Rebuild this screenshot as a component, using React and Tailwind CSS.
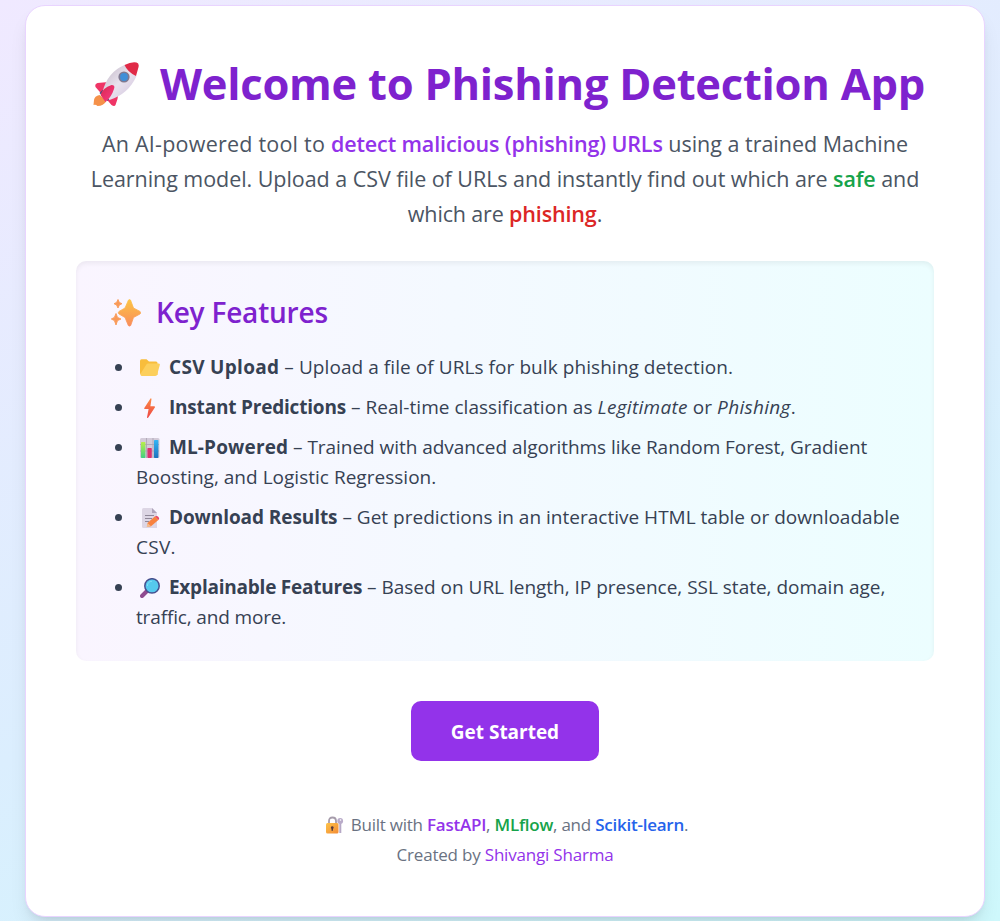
import React from 'react';

function Rocket() {
  return (
    <svg viewBox="0 0 46 46" className="mt-[2px] h-[46px] w-[47px] shrink-0">
      <defs>
        <linearGradient id="rk-body" x1="0" y1="0" x2="1" y2="1">
          <stop offset="0" stopColor="#bfb4c4" />
          <stop offset=".5" stopColor="#e9e3ee" />
          <stop offset="1" stopColor="#cfc0dc" />
        </linearGradient>
        <linearGradient id="rk-fin" x1="0" y1="0" x2="1" y2="1">
          <stop offset="0" stopColor="#d8284f" />
          <stop offset="1" stopColor="#fb3c86" />
        </linearGradient>
      </defs>
      <path d="M6 33Q1 34 .5 38L0 43Q2 42 4 44Q10 44 13 39Z" fill="#f5914a" />
      <path d="M15 20L4 21Q1 22 2 25L9 33ZM25 30L24 37L22 43Q21 45 18 43L12 36Z" fill="#ef3566" />
      <path d="M6 31L14 39L17 36L9 28Z" fill="#46497f" />
      <path d="M9 30Q14 10 31 3L43 14Q35 32 16 38Z" fill="url(#rk-body)" />
      <path d="M31 3Q38 -.5 43 .5Q46.5 1.5 44.5 7L42.5 14Q34 10 31 3Z" fill="#e02a47" />
      <path d="M7 33Q9 26 18 23Q22 23 20.5 27Q18 35 12 40Q9 36 7 33Z" fill="url(#rk-fin)" />
      <circle cx="30.5" cy="15" r="5.6" fill="#7f7990" />
      <circle cx="30.5" cy="15" r="3.9" fill="#3f8fd8" />
    </svg>
  );
}

function Sparkles() {
  return (
    <svg viewBox="0 0 30 28" className="mt-[1px] h-[28px] w-[30px] shrink-0">
      <defs>
        <linearGradient id="sp" x1="0" y1="0" x2="0" y2="1">
          <stop offset="0" stopColor="#fcc444" />
          <stop offset="1" stopColor="#f98c5c" />
        </linearGradient>
      </defs>
      <path d="M17.5 1Q18.5 .2 19.5 1L22.5 9L29 12.4Q30.4 13.7 29 15L22.5 18.5L19.7 26.5Q18.5 27.7 17.3 26.5L14 18.5L8 15Q6.6 13.7 8 12.4L14 9Z" fill="url(#sp)" stroke="url(#sp)" strokeWidth=".8" strokeLinejoin="round" />
      <path d="M7 .5L8.3 3.4L11 4.7L8.3 6L7 9L5.6 6L3 4.7L5.6 3.4ZM5 14.5L6.5 18.4L10 20L6.5 21.6L5 26L3.4 21.6L.3 20L3.4 18.4Z" fill="#f99a58" stroke="#f99a58" strokeWidth=".9" strokeLinejoin="round" />
    </svg>
  );
}

const ICON = 'mr-[4px] ml-[4px] inline-block h-[20px] w-[20px] align-[-4px]';

function Folder() {
  return (
    <svg viewBox="0 0 20 20" className={ICON}>
      <path d="M0 3Q0 1.2 1.5 1.2H6.5L9 3.4H16Q17.5 3.4 17.5 5V17H2Q0 17 0 15Z" fill="#f8bd3c" />
      <path d="M1 17.8Q.2 17 1 15L6.2 6.7Q6.8 5.4 8.5 5.4H18.5Q20.2 5.5 19.8 7L17.2 16.5Q16.8 18 15 18H2Z" fill="#fccf5c" />
    </svg>
  );
}

function Bolt() {
  return (
    <svg viewBox="0 0 20 20" className={ICON}>
      <defs>
        <linearGradient id="bolt" x1="0" y1="0" x2="0" y2="1">
          <stop offset="0" stopColor="#fb8a45" />
          <stop offset="1" stopColor="#ee4745" />
        </linearGradient>
      </defs>
      <path d="M10.5 .5L4.3 10Q4 11 5 11H8.6L7 19.4Q7.4 20.4 8.3 19.5L15 9.3Q15.3 8.2 14 8.2H10.4L11.5 1Q11.2 0 10.5 .5Z" fill="url(#bolt)" />
    </svg>
  );
}

function Chart() {
  return (
    <svg viewBox="0 0 20 20" className={ICON}>
      <defs>
        <linearGradient id="ch-g" x1="0" y1="0" x2="0" y2="1"><stop offset="0" stopColor="#b9ef4a" /><stop offset="1" stopColor="#42cf83" /></linearGradient>
        <linearGradient id="ch-b" x1="0" y1="0" x2="0" y2="1"><stop offset="0" stopColor="#35b5f5" /><stop offset="1" stopColor="#1d72bd" /></linearGradient>
      </defs>
      <rect width="19.5" height="20" rx="1.5" fill="#d3cbd9" />
      <path d="M0 6.5H19M0 13H19M6.5 0V20M13 0V20" stroke="#aaa2b1" strokeWidth=".8" />
      <rect x="1" y="4" width="4.4" height="16" rx=".7" fill="url(#ch-g)" />
      <rect x="7.4" y="10" width="4.4" height="10" rx=".7" fill="#dc3370" />
      <rect x="14" y="2" width="4.4" height="18" rx=".7" fill="url(#ch-b)" />
    </svg>
  );
}

function Memo() {
  return (
    <svg viewBox="0 0 20 20" className={ICON}>
      <path d="M3.5 0H12L17 5V20H3.5Q2 20 2 18.5V1.5Q2 0 3.5 0Z" fill="#ddd6e5" />
      <path d="M12 0V5H17Z" fill="#aea4ba" />
      <path d="M5 7.5H14M5 10.5H12M5 13.5H9" stroke="#8f8799" strokeWidth="1" />
      <path d="M7.5 15L15 8.3L18.4 12L11 18.3L7 19Z" fill="#f8823f" />
      <path d="M15 8.3Q17 7.3 18.5 9Q20 11 18.4 12L15 8.3Z" fill="#e94560" />
      <path d="M7.5 15L11 18.3L6.6 19.3Z" fill="#f3bd91" />
    </svg>
  );
}

function Magnifier() {
  return (
    <svg viewBox="0 0 20 20" className={ICON}>
      <path d="M7 13L2 18" stroke="#8f4b8f" strokeWidth="4" strokeLinecap="round" />
      <circle cx="12" cy="7.9" r="7.2" fill="#55c9ee" stroke="#46508f" strokeWidth="1.5" />
      <path d="M7.4 8A4.8 4.8 0 0 1 12 3.3" fill="none" stroke="#80def5" strokeWidth="1" />
    </svg>
  );
}

function LockKey() {
  return (
    <svg viewBox="0 0 18 18" className="mr-[7px] inline-block h-[18px] w-[18px] align-[-3px]">
      <defs>
        <linearGradient id="lock" x1="0" y1="0" x2="1" y2="1"><stop offset="0" stopColor="#fdc348" /><stop offset="1" stopColor="#f38b34" /></linearGradient>
      </defs>
      <path d="M3 8V5Q3 1.5 6.5 1.5Q10 1.5 10 5V8" fill="none" stroke="#a69cab" strokeWidth="1.8" />
      <path d="M14.3 6V17" stroke="#b6a8c6" strokeWidth="2" />
      <circle cx="14.2" cy="5" r="2.9" fill="#b9abc9" />
      <circle cx="14.5" cy="4" r=".8" fill="#fff" />
      <rect x="0" y="7" width="12.5" height="10.5" rx="1.5" fill="url(#lock)" />
      <path d="M6.2 10.2A1.4 1.4 0 0 1 7 12.8V14.7H5.5V12.8A1.4 1.4 0 0 1 6.2 10.2Z" fill="#573a3d" />
    </svg>
  );
}

function Feature({ children }) {
  return (
    <li className="flex">
      <span className="mt-[12px] mr-[14px] ml-[9px] h-[7px] w-[7px] shrink-0 rounded-full bg-[#364153]" />
      <div className="whitespace-nowrap">{children}</div>
    </li>
  );
}

export default function App() {
  return (
    <div className="flex h-[921px] overflow-hidden bg-[linear-gradient(155deg,#f0e9ff_0%,#dbeefe_55%,#cef8fc_100%)] pt-[5px] pl-[25px] font-['Open_Sans','Noto_Sans',sans-serif]">
      <main className="h-[912px] w-[960px] rounded-[20px] border border-[#e9d4ff] bg-white px-[50px] pt-[50px] shadow-[0_12px_19px_-4px_rgba(0,0,0,0.1),0_5px_8px_-5px_rgba(0,0,0,0.1)]">
        <h1 className="flex h-[55px] items-center justify-center gap-[20px] pl-[8px] whitespace-nowrap text-[#7e22ce]">
          <Rocket />
          <span className="text-[43.5px] leading-[55px] font-bold tracking-[-0.25px]">Welcome to Phishing Detection App</span>
        </h1>
        <p className="mt-[15px] text-center text-[21.5px] leading-[35px] whitespace-nowrap text-[#4b5563]">
          <span className="block tracking-[-0.02px]"><span className="tracking-[0.22px]">An AI-powered tool to </span><b className="font-semibold tracking-[-0.12px] text-[#9333ea]">detect malicious (phishing) URLs</b> using a trained Machine</span>
          <span className="block tracking-[-0.05px]">Learning model. Upload a CSV file of URLs and instantly find out which are <b className="font-semibold tracking-[-0.15px] text-[#16a34a]">safe</b> and</span>
          <span className="block tracking-[-0.15px]">which are <b className="font-semibold text-[#dc2626]">phishing</b>.</span>
        </p>
        <section className="mt-[30px] h-[400px] rounded-[10px] bg-linear-to-r from-[#faf5ff] to-[#ecfeff] px-[30px] pt-[31px] shadow-[inset_0_2.5px_5px_rgba(0,0,0,0.06)]">
          <h2 className="flex h-[40px] items-center gap-[15px] pl-[5px] text-[28px] font-semibold tracking-[-0.2px] text-[#7e22ce]">
            <Sparkles />
            Key Features
          </h2>
          <ul className="mt-[20px] flex flex-col gap-[10px] text-[19px] leading-[30px] text-[#364153]">
            <Feature>
              <span className="block tracking-[0.07px]"><Folder /> <b className="tracking-[0.3px]">CSV Upload</b> – Upload a file of URLs for bulk phishing detection.</span>
            </Feature>
            <Feature>
              <span className="block tracking-[0.04px]"><Bolt /> <b className="tracking-[-0.2px]">Instant Predictions</b> – Real-time classification as <i className="tracking-[0.3px]">Legitimate</i> or <i className="tracking-[0.3px]">Phishing</i>.</span>
            </Feature>
            <Feature>
              <span className="block tracking-[-0.05px]"><Chart /> <b className="tracking-[0.15px]">ML-Powered</b> – Trained with advanced algorithms like Random Forest, Gradient</span>
              <span className="block tracking-[0.02px]">Boosting, and Logistic Regression.</span>
            </Feature>
            <Feature>
              <span className="block tracking-[0.01px]"><Memo /> <b className="tracking-[-0.08px]">Download Results</b> – Get predictions in an interactive HTML table or downloadable</span>
              <span className="block tracking-[0.3px]">CSV.</span>
            </Feature>
            <Feature>
              <span className="block tracking-[-0.01px]"><Magnifier /> <b className="tracking-[-0.23px]">Explainable Features</b> – Based on URL length, IP presence, SSL state, domain age,</span>
              <span className="block tracking-[-0.15px]">traffic, and more.</span>
            </Feature>
          </ul>
        </section>
        <div className="mt-[40px] flex justify-center">
          <button className="h-[60px] w-[188px] rounded-[10px] bg-[#9333ea] pt-[2px] text-[19px] font-bold tracking-[-0.02px] text-white">Get Started</button>
        </div>
        <footer className="mt-[49px] text-center text-[17px] leading-[30px] whitespace-nowrap text-[#6a7282]">
          <p className="pl-[4px] tracking-[-0.24px]"><LockKey />Built with <b className="font-semibold text-[#9333ea]">FastAPI</b>, <b className="font-semibold text-[#16a34a]">MLflow</b>, and <b className="font-semibold text-[#2563eb]">Scikit-learn</b>.</p>
          <p className="tracking-[-0.2px]">Created by <a className="text-[#9333ea]">Shivangi Sharma</a></p>
        </footer>
      </main>
    </div>
  );
}
